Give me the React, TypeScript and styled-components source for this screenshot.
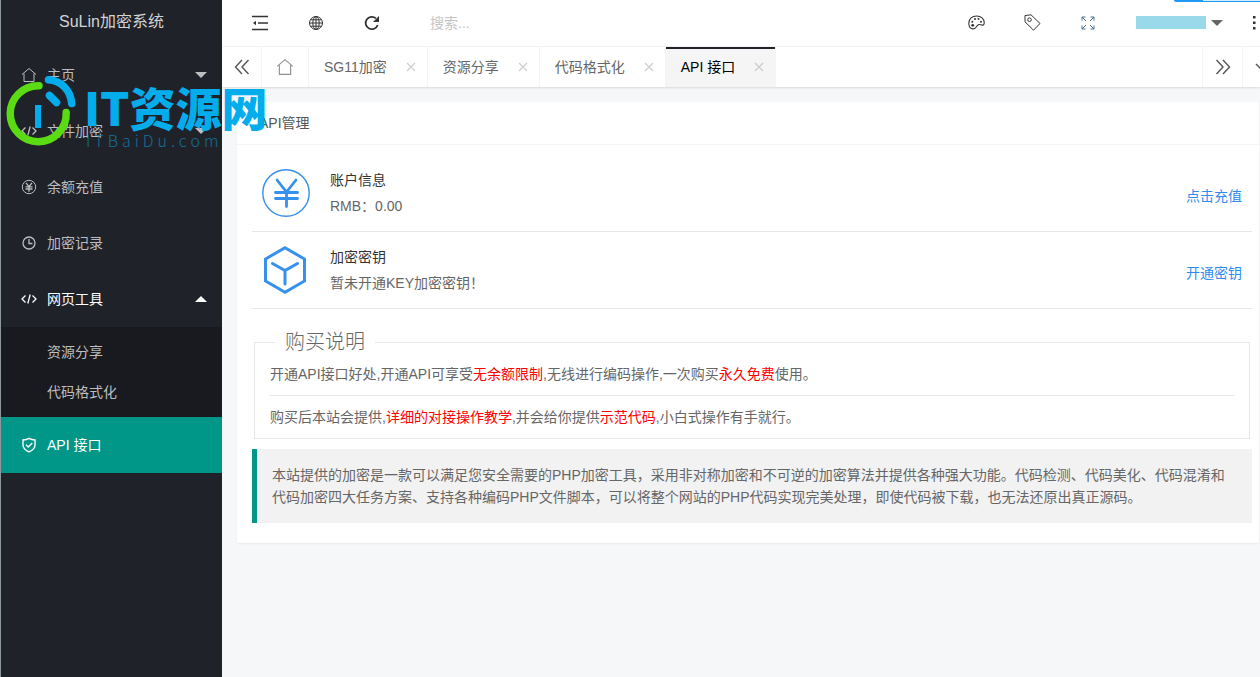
import React from 'react';
import styled, { createGlobalStyle } from 'styled-components';

const GlobalStyle = createGlobalStyle`
  * { box-sizing: border-box; }
  body {
    margin: 0;
    background: #f5f7f9;
    color: #666;
    font: 14px/22px "Liberation Sans", "Noto Sans CJK SC", sans-serif;
  }
  button, input { font: inherit; color: inherit; }
  a { text-decoration: none; color: inherit; }
`;

const Shell = styled.div`
  position: relative;
  display: flex;
  min-height: 100vh;
  overflow: hidden;
`;

const Sidebar = styled.aside`
  flex: 0 0 222px;
  background: #20222a;
  border-left: 1px solid #8d979c;
`;

const Brand = styled.h1`
  margin: 0;
  height: 47px;
  padding-bottom: 3px;
  display: flex;
  align-items: center;
  justify-content: center;
  font-size: 16px;
  font-weight: 400;
  color: #d2d3d4;
`;

const MenuLink = styled.a<{ $active?: boolean; $open?: boolean }>`
  display: flex;
  align-items: center;
  gap: 10px;
  height: 56px;
  padding: 0 15px 0 20px;
  color: ${p => (p.$active || p.$open ? '#fff' : '#bcbdbf')};
  background: ${p => (p.$active ? '#009688' : 'transparent')};
`;

const MenuLabel = styled.span`
  flex: 1;
`;

const SubMenu = styled.div`
  padding: 5px 0;
  background: #191a20;
`;

const SubLink = styled.a`
  display: block;
  padding-left: 46px;
  line-height: 40px;
  color: #bcbdbf;
`;

const Page = styled.div`
  flex: 1;
  min-width: 0;
`;

const Header = styled.header`
  display: flex;
  align-items: center;
  height: 47px;
  padding: 0 1px 1px 10px;
  background: #fff;
  border-bottom: 1px solid #f4f4f4;
`;

const IconButton = styled.button`
  display: flex;
  align-items: center;
  justify-content: center;
  width: 56px;
  height: 45px;
  padding: 0;
  border: 0;
  background: none;
  color: #333;
`;

const Search = styled.input`
  flex: 1;
  min-width: 0;
  margin-left: 30px;
  padding: 0;
  border: 0;
  outline: 0;
  background: none;
  &::placeholder { color: #c4c4c4; opacity: 1; }
`;

const UserButton = styled.button`
  display: flex;
  align-items: center;
  gap: 5px;
  height: 45px;
  margin-left: 20px;
  padding: 0;
  border: 0;
  background: none;
`;

const UserName = styled.span`
  width: 70px;
  height: 13px;
  background: #9ad9ea;
`;

const MoreButton = styled(IconButton)`
  width: 10px;
  margin-left: 26px;
`;

const TopStrip = styled.div`
  position: absolute;
  top: 0;
  right: 0;
  width: 86px;
  height: 2px;
  border-bottom: 1px solid #1e9bf5;
  border-bottom-left-radius: 2px;
  background: linear-gradient(to right, #2196f3 34%, #d3ecfd 34%);
`;

const TabBar = styled.nav`
  display: flex;
  height: 40px;
  background: #fff;
  box-shadow: 0 1px 2px rgba(0, 0, 0, 0.12);
`;

const TabTool = styled.button<{ $side: 'left' | 'right'; $width: number; $light?: boolean }>`
  display: flex;
  align-items: center;
  justify-content: center;
  flex: none;
  width: ${p => p.$width}px;
  padding: 0;
  overflow: hidden;
  border: 0 solid #f4f4f4;
  border-left-width: ${p => (p.$side === 'left' ? 1 : 0)}px;
  border-right-width: ${p => (p.$side === 'right' ? 1 : 0)}px;
  background: none;
  color: ${p => (p.$light ? '#909090' : '#555')};
`;

const Tabs = styled.div`
  display: flex;
  flex: 1;
`;

const Tab = styled.div<{ $active?: boolean }>`
  display: flex;
  align-items: center;
  gap: 19px;
  padding: 0 11px 0 15px;
  border-right: 1px solid #f4f4f4;
  white-space: nowrap;
  color: ${p => (p.$active ? '#000' : '#666')};
  background: ${p => (p.$active ? '#f5f5f5' : '#fff')};
  box-shadow: ${p => (p.$active ? 'inset 0 2px 0 #20222a' : 'none')};
`;

const CloseButton = styled.button`
  display: flex;
  padding: 0;
  border: 0;
  background: none;
  color: #ceced2;
`;

const Main = styled.main`
  padding: 15px 1px 15px 15px;
`;

const Card = styled.section`
  background: #fff;
  border-radius: 2px;
  box-shadow: 0 1px 2px rgba(0, 0, 0, 0.06);
`;

const CardHeader = styled.h2`
  margin: 0;
  padding: 0 22px;
  font-size: 14px;
  font-weight: 400;
  line-height: 42px;
  color: #555;
  border-bottom: 1px solid #f4f4f4;
`;

const CardBody = styled.div`
  padding: 10px 7px 10px 15px;
`;

const InfoRow = styled.div`
  display: flex;
  align-items: center;
  height: 77px;
  padding: 0 10px;
  border-bottom: 1px solid #e6e6e6;
`;

const InfoIcon = styled.span`
  display: flex;
  width: 68px;
`;

const InfoText = styled.div`
  flex: 1;
  line-height: 26px;
`;

const InfoTitle = styled.div`
  color: #333;
`;

const ActionLink = styled.a`
  padding-top: 6px;
  color: #2d8cf0;
`;

const Notes = styled.fieldset`
  margin: 22px 2px 10px;
  padding: 0;
  border: 1px solid #e6e6e6;
`;

const NotesTitle = styled.legend`
  margin-left: 20px;
  padding: 0 10px;
  font-size: 20px;
  font-weight: 300;
`;

const NotesBody = styled.div`
  padding: 10px 15px;
`;

const Note = styled.p`
  margin: 0;
  & + & {
    margin-top: 10px;
    padding-top: 10px;
    border-top: 1px solid #e6e6e6;
  }
`;

const Hot = styled.span`
  color: #f00;
`;

const Quote = styled.blockquote`
  margin: 0 0 10px;
  padding: 15px;
  border-left: 5px solid #009688;
  background: #f2f2f2;
`;

const Stamp = styled.div`
  position: absolute;
  left: 6px;
  top: 74px;
  display: flex;
  gap: 6px;
  pointer-events: none;
`;

const StampText = styled.div`
  padding-top: 12px;
  white-space: nowrap;
`;

const StampName = styled.div`
  font: 900 46px/40px "Noto Sans CJK SC", sans-serif;
  color: #03adec;
`;

const StampSite = styled.div`
  padding-left: 2px;
  font: 300 16px/28px "Noto Sans CJK SC", sans-serif;
  letter-spacing: 4px;
  color: #146f95;
`;

const Svg = ({ size = 16, sw = 1, box = 16, children }: { size?: number; sw?: number; box?: number; children: React.ReactNode }) => (
  <svg width={size} height={size} viewBox={`0 0 ${box} ${box}`} fill="none" stroke="currentColor" strokeWidth={sw} aria-hidden="true">
    {children}
  </svg>
);

const HomeIcon = ({ size = 16 }: { size?: number }) => (
  <Svg size={size}><path d="M1 7.500 8 1.500l7 6M3 6.500v8h10v-8" /></Svg>
);
const CodeIcon = () => (
  <Svg sw={1.300}><path d="M4.500 4.500 1 8l3.500 3.500M11.500 4.500 15 8l-3.500 3.500M9.200 3.500 6.800 12.500" /></Svg>
);
const YenIcon = () => (
  <Svg><circle cx="8" cy="8" r="6.700" /><path d="M5 3.800l3 3.800 3-3.800M8 7.600V12.700M4.500 7.800h7M4.500 10h7" strokeWidth="1.300" /></Svg>
);
const ClockIcon = () => (
  <Svg sw={1.300}><circle cx="8" cy="8" r="6" /><path d="M8 4v4.500h3.500" /></Svg>
);
const ShieldIcon = () => (
  <Svg sw={1.400}><path d="M8 1.300c2 1.200 4 1.600 6 1.700v5c0 3.200-2.500 5.400-6 6.800-3.500-1.400-6-3.600-6-6.800V3c2-.1 4-.5 6-1.700z" /><path d="m5 7.700 2.300 2.300L11.300 6" /></Svg>
);
const Caret = ({ up }: { up?: boolean }) => (
  <svg width="12" height="6" viewBox="0 0 12 6" fill="currentColor" aria-hidden="true">
    <path d={up ? 'M0 6 6 0l6 6z' : 'M0 0h12L6 6z'} />
  </svg>
);
const CloseIcon = () => (
  <svg width="10" height="10" viewBox="0 0 10 10" stroke="currentColor" strokeWidth="1.300" aria-hidden="true">
    <path d="m1 1 8 8M9 1 1 9" />
  </svg>
);
const StampMark = () => (
  <svg width="72" height="74" viewBox="6 74 72 74" fill="none" strokeWidth="7.500" strokeLinecap="round" aria-hidden="true">
    <path d="M39 85.700A28 28 0 1 0 66.200 112.500" stroke="#5adb14" />
    <path d="M48.500 79.700C61 80.500 70.500 90 71.700 103.500" stroke="#03adec" />
    <path d="m49.500 95.500 7 7" stroke="#03adec" />
    <path d="M38 105v23" stroke="#03adec" strokeWidth="6" strokeLinecap="butt" />
  </svg>
);

const tabs = ['SG11加密', '资源分享', '代码格式化', 'API 接口'];

export default function App() {
  return (
    <>
      <GlobalStyle />
      <Shell>
        <Sidebar>
          <Brand>SuLin加密系统</Brand>
          <MenuLink href="#home"><HomeIcon /><MenuLabel>主页</MenuLabel><Caret /></MenuLink>
          <MenuLink href="#files"><CodeIcon /><MenuLabel>文件加密</MenuLabel><Caret /></MenuLink>
          <MenuLink href="#recharge"><YenIcon /><MenuLabel>余额充值</MenuLabel></MenuLink>
          <MenuLink href="#records"><ClockIcon /><MenuLabel>加密记录</MenuLabel></MenuLink>
          <MenuLink href="#tools" $open><CodeIcon /><MenuLabel>网页工具</MenuLabel><Caret up /></MenuLink>
          <SubMenu>
            <SubLink href="#share">资源分享</SubLink>
            <SubLink href="#format">代码格式化</SubLink>
          </SubMenu>
          <MenuLink href="#api" $active><ShieldIcon /><MenuLabel>API 接口</MenuLabel></MenuLink>
        </Sidebar>
        <Page>
          <Header>
            <IconButton aria-label="收起菜单">
              <Svg sw={1.600}><path d="M0 1.500h16M6 8h10M0 14.500h16" /><path d="M1 8l3-2.200v4.400z" fill="currentColor" stroke="none" /></Svg>
            </IconButton>
            <IconButton aria-label="网站">
              <Svg><circle cx="8" cy="8" r="6.500" /><ellipse cx="8" cy="8" rx="3.200" ry="6.500" /><path d="M8 1.500v13M1.500 8h13M2.500 4.800h11M2.500 11.200h11" /></Svg>
            </IconButton>
            <IconButton aria-label="刷新">
              <Svg sw={1.800}><path d="M13.700 10A6.200 6.200 0 1 1 12 3.400" /><path d="M15 1v6H9z" fill="currentColor" stroke="none" /></Svg>
            </IconButton>
            <Search aria-label="搜索" placeholder="搜索..." />
            <IconButton aria-label="主题">
              <Svg size={17} sw={1.100} box={17}>
                <path d="M4 14.800C2.200 14.200.800 12 .800 9.200.800 4.800 4.200 2 8.700 2c4.300 0 7.500 3 7.500 6.500 0 2.300-1 3-2.500 2.500-1.700-.6-3.200-.8-4.200.3-.9 1-1.300 2-2.300 2.800-.9.700-2 1-3.200.7z" />
                <g fill="currentColor" stroke="none"><circle cx="4.700" cy="11.300" r="1.400" /><circle cx="4.300" cy="7.700" r="1" /><circle cx="7" cy="5" r="1" /><circle cx="10.500" cy="5" r="1" /><circle cx="13" cy="7.700" r="1" /></g>
              </Svg>
            </IconButton>
            <IconButton aria-label="便签">
              <Svg size={17} box={17}><path d="M1 1.500 7 .8l9 8.700-6.500 6.700L1 7.800z" strokeLinejoin="round" /><circle cx="5.500" cy="5.700" r="1.800" /></Svg>
            </IconButton>
            <IconButton aria-label="全屏">
              <Svg size={14} box={14}><path d="M1 4.500V1h3.500M1 1l4 4M9.500 1H13v3.500M13 1 9 5M1 9.500V13h3.500M1 13l4-4M9.500 13H13V9.500M13 13 9 9" stroke="#4d6f94" /></Svg>
            </IconButton>
            <UserButton aria-label="用户菜单"><UserName /><Caret /></UserButton>
            <MoreButton aria-label="更多">
              <svg width="4" height="14" viewBox="0 0 4 14" fill="#333" aria-hidden="true"><path d="M1 0h2.500v2.500H1zM1 5.500h2.500V8H1zM1 11h2.500v2.500H1z" /></svg>
            </MoreButton>
          </Header>
          <TabBar>
            <TabTool $side="right" $width={40} aria-label="向左">
              <Svg sw={1.400}><path d="M8 1 1.500 8 8 15M14.500 1 8 8l6.500 7" /></Svg>
            </TabTool>
            <TabTool $side="right" $width={47} $light aria-label="首页"><HomeIcon size={18} /></TabTool>
            <Tabs>
              {tabs.map((name, i) => (
                <Tab key={name} $active={i === tabs.length - 1}>
                  {name}
                  <CloseButton aria-label={`关闭${name}`}><CloseIcon /></CloseButton>
                </Tab>
              ))}
            </Tabs>
            <TabTool $side="left" $width={40} aria-label="向右">
              <Svg sw={1.400}><path d="m1.500 1 6.500 7-6.500 7M8 1l6.500 7L8 15" /></Svg>
            </TabTool>
            <TabTool $side="left" $width={18} aria-label="标签菜单">
              <svg width="17" height="8" viewBox="0 0 17 8" fill="none" stroke="currentColor" strokeWidth="1.400" aria-hidden="true"><path d="m13 1 5 5" /></svg>
            </TabTool>
          </TabBar>
          <Main>
            <Card>
              <CardHeader>API管理</CardHeader>
              <CardBody>
                <InfoRow>
                  <InfoIcon>
                    <Svg size={48} box={48} sw={1.400}>
                      <g stroke="#3690ee"><circle cx="24" cy="24" r="23.200" /><path d="m15 11 9.500 12L34 11M24.500 23v14.500M13.500 23.500h22M13.500 29.500h22" strokeWidth="2.800" strokeLinecap="round" /></g>
                    </Svg>
                  </InfoIcon>
                  <InfoText><InfoTitle>账户信息</InfoTitle>RMB：0.00</InfoText>
                  <ActionLink href="#recharge">点击充值</ActionLink>
                </InfoRow>
                <InfoRow>
                  <InfoIcon>
                    <Svg size={48} box={48} sw={3}>
                      <g stroke="#3690ee"><path d="M23 1.800 42.500 13v22L23 46.200 3.500 35V13z" /><path d="m10.500 17.500 12.500 7 12.500-7M23 24.500V38" strokeLinecap="round" /></g>
                    </Svg>
                  </InfoIcon>
                  <InfoText><InfoTitle>加密密钥</InfoTitle>暂未开通KEY加密密钥！</InfoText>
                  <ActionLink href="#key">开通密钥</ActionLink>
                </InfoRow>
                <Notes>
                  <NotesTitle>购买说明</NotesTitle>
                  <NotesBody>
                    <Note>开通API接口好处,开通API可享受<Hot>无余额限制</Hot>,无线进行编码操作,一次购买<Hot>永久免费</Hot>使用。</Note>
                    <Note>购买后本站会提供,<Hot>详细的对接操作教学</Hot>,并会给你提供<Hot>示范代码</Hot>,小白式操作有手就行。</Note>
                  </NotesBody>
                </Notes>
                <Quote>本站提供的加密是一款可以满足您安全需要的PHP加密工具，采用非对称加密和不可逆的加密算法并提供各种强大功能。代码检测、代码美化、代码混淆和代码加密四大任务方案、支持各种编码PHP文件脚本，可以将整个网站的PHP代码实现完美处理，即使代码被下载，也无法还原出真正源码。</Quote>
              </CardBody>
            </Card>
          </Main>
        </Page>
        <TopStrip />
        <Stamp>
          <StampMark />
          <StampText>
            <StampName>IT资源网</StampName>
            <StampSite>ITBaiDu.com</StampSite>
          </StampText>
        </Stamp>
      </Shell>
    </>
  );
}
